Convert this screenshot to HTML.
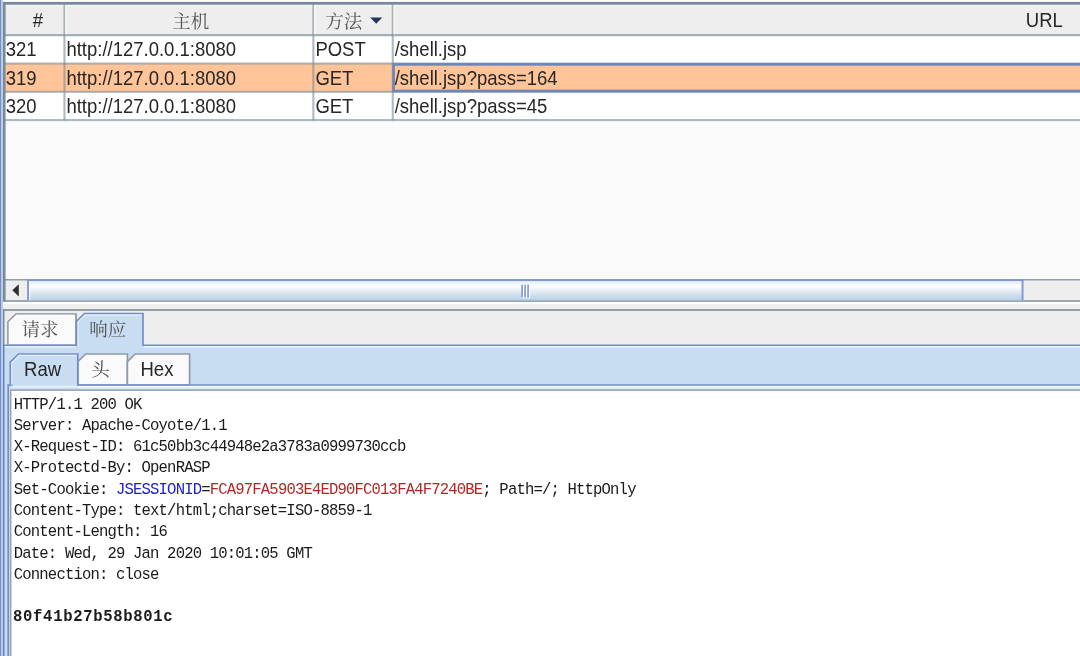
<!DOCTYPE html>
<html lang="zh-CN">
<head>
<meta charset="utf-8">
<title>Burp Suite - HTTP history</title>
<style>
  html, body { margin: 0; padding: 0; background: #ffffff; }
  body { width: 1080px; height: 656px; overflow: hidden; position: relative; }
  svg { position: absolute; left: 0; top: 0; display: block; will-change: transform; }
  text { white-space: pre; }
  .ui   { font-family: "Liberation Sans", "Noto Sans CJK SC", sans-serif; font-size: 18.5px; fill: #262626; }
  .cjk  { font-family: "Liberation Serif", "Noto Serif CJK SC", serif; font-size: 18.5px; fill: #555555; }
  .mono { font-family: "Liberation Mono", "Noto Sans CJK SC", monospace; font-size: 15.6px; fill: #1a1a1a; letter-spacing: -0.83px; }
  .b    { font-weight: bold; letter-spacing: 0.66px; }
  .blue { fill: #2020cc; }
  .red  { fill: #b42626; }
</style>
</head>
<body>
<svg width="1080" height="656" viewBox="0 0 1080 656">
  <defs>
    <linearGradient id="thumb" x1="0" y1="0" x2="0" y2="1">
      <stop offset="0" stop-color="#dde8f3"/>
      <stop offset="0.3" stop-color="#ffffff"/>
      <stop offset="0.6" stop-color="#dde8f3"/>
      <stop offset="1" stop-color="#b8cfe5"/>
    </linearGradient>
  </defs>

  <!-- page background -->
  <rect x="0" y="0" width="1080" height="656" fill="#ffffff"/>

  <!-- left window strip -->
  <rect x="0" y="0" width="1.5" height="656" fill="#6f8ecb"/>
  <rect x="1.5" y="0" width="1.5" height="656" fill="#b9cde6"/>

  <!-- ============ TABLE PANEL ============ -->
  <!-- header -->
  <rect x="4" y="3" width="1080" height="32" fill="#eeeeee"/>
  <rect x="4" y="4.6" width="1080" height="1.4" fill="#f6f6f6"/>

  <!-- rows -->
  <rect x="4" y="35" width="1080" height="85" fill="#ffffff"/>
  <rect x="4" y="63.5" width="1080" height="28.3" fill="#ffc599"/>

  <!-- empty viewport -->
  <rect x="4" y="120" width="1080" height="160" fill="#fafafa"/>

  <!-- grid lines -->
  <rect x="4" y="34.1" width="1080" height="2.1" fill="#7a8a99" opacity="0.7"/>
  <rect x="4" y="62.5" width="1080" height="2.1" fill="#7a8a99" opacity="0.6"/>
  <rect x="4" y="90.8" width="1080" height="2.1" fill="#7a8a99" opacity="0.6"/>
  <rect x="4" y="119" width="1080" height="2.1" fill="#7a8a99" opacity="0.6"/>

  <!-- column separators -->
  <rect x="63.4" y="4" width="2.1" height="116.5" fill="#7a8a99" opacity="0.6"/>
  <rect x="312.3" y="4" width="2.1" height="116.5" fill="#7a8a99" opacity="0.6"/>
  <rect x="391.7" y="4" width="2.1" height="116.5" fill="#7a8a99" opacity="0.6"/>
  <!-- header cell highlights -->
  <rect x="65.1" y="4.6" width="1.4" height="29.8" fill="#ffffff" opacity="0.8"/>
  <rect x="314.1" y="4.6" width="1.4" height="29.8" fill="#ffffff" opacity="0.8"/>
  <rect x="393.4" y="4.6" width="1.4" height="29.8" fill="#ffffff" opacity="0.8"/>

  <!-- focused cell border -->
  <rect x="393.6" y="64.4" width="700" height="26.6" fill="none" stroke="#6b86bd" stroke-width="2.6"/>

  <!-- header labels -->
  <text class="ui" transform="translate(32.7,27.2) scale(1,1.09)" fill="#333">#</text>
  <text class="cjk" x="172.2" y="27.9">主机</text>
  <text class="cjk" x="325.3" y="27.9">方法</text>
  <path d="M370.2 17.4 L382.2 17.4 L376.2 23.8 Z" fill="#1f3a57"/>
  <text class="ui" transform="translate(1025.8,27.2) scale(1,1.09)" fill="#333">URL</text>

  <!-- row text -->
  <text class="ui" transform="translate(5.7,56.2) scale(1,1.09)">321</text>
  <text class="ui" transform="translate(66.4,56.2) scale(1,1.09)">http://127.0.0.1:8080</text>
  <text class="ui" transform="translate(315.4,56.2) scale(1,1.09)">POST</text>
  <text class="ui" transform="translate(394.7,56.2) scale(1,1.09)">/shell.jsp</text>

  <text class="ui" transform="translate(5.7,84.5) scale(1,1.09)">319</text>
  <text class="ui" transform="translate(66.4,84.5) scale(1,1.09)">http://127.0.0.1:8080</text>
  <text class="ui" transform="translate(315.4,84.5) scale(1,1.09)">GET</text>
  <text class="ui" transform="translate(394.7,84.5) scale(1,1.09)">/shell.jsp?pass=164</text>

  <text class="ui" transform="translate(5.7,112.7) scale(1,1.09)">320</text>
  <text class="ui" transform="translate(66.4,112.7) scale(1,1.09)">http://127.0.0.1:8080</text>
  <text class="ui" transform="translate(315.4,112.7) scale(1,1.09)">GET</text>
  <text class="ui" transform="translate(394.7,112.7) scale(1,1.09)">/shell.jsp?pass=45</text>

  <!-- horizontal scrollbar -->
  <rect x="4" y="279.5" width="1080" height="22" fill="#eeeeee"/>
  <rect x="4" y="279" width="1080" height="1.5" fill="#8d9baa"/>
  <rect x="4" y="300.2" width="1080" height="1.7" fill="#8796a5"/>
  <!-- thumb -->
  <rect x="27.6" y="280.4" width="995" height="20" fill="url(#thumb)"/>
  <rect x="27.1" y="279" width="996.4" height="2" fill="#8099d0"/>
  <rect x="27.1" y="279" width="1.9" height="21.3" fill="#8099d0"/>
  <rect x="1021.6" y="279" width="1.9" height="21.3" fill="#8099d0"/>
  <rect x="29" y="281" width="1.3" height="19.3" fill="#ffffff" opacity="0.6"/>
  <!-- grip -->
  <g>
    <rect x="522.6" y="286" width="1.5" height="12.4" fill="#ffffff"/>
    <rect x="525.6" y="286" width="1.5" height="12.4" fill="#ffffff"/>
    <rect x="528.6" y="286" width="1.5" height="12.4" fill="#ffffff"/>
    <rect x="521.3" y="284.7" width="1.6" height="12.6" fill="#7f9bd3"/>
    <rect x="524.3" y="284.7" width="1.6" height="12.6" fill="#7f9bd3"/>
    <rect x="527.3" y="284.7" width="1.6" height="12.6" fill="#7f9bd3"/>
  </g>
  <!-- left arrow -->
  <path d="M12.3 290.3 L18.8 284.2 L18.8 296.4 Z" fill="#2e2e2e"/>

  <!-- outer border -->
  <rect x="3" y="1.9" width="1080" height="2.8" fill="#7a8a99"/>
  <rect x="3" y="1.9" width="2.55" height="300" fill="#7a8a99"/>

  <!-- gap under scrollbar -->
  <rect x="3" y="301.9" width="1080" height="2.2" fill="#ffffff"/>
  <rect x="3" y="304.1" width="1080" height="6" fill="#efefef"/>

  <!-- ============ REQUEST / RESPONSE PANEL ============ -->
  <rect x="3" y="309.8" width="1080" height="36" fill="#eeeeee"/>
  <!-- outer content area -->
  <rect x="3" y="345.2" width="1080" height="312" fill="#c8ddf2"/>
  <rect x="3" y="309.2" width="1080" height="1.6" fill="#7a8a99"/>
  <rect x="3" y="309.2" width="1.5" height="36" fill="#7a8a99"/>
  <rect x="3" y="344.5" width="1.5" height="312" fill="#6382bf"/>

  <!-- tab: 请求 (unselected) -->
  <path d="M8 345.2 L8 321.8 L16 314 L76 314 L76 345.2 Z" fill="#fafafa" stroke="#8796a5" stroke-width="1.65"/>
  <path d="M9.5 344.4 L9.5 322.4 L16.6 315.5 L74.6 315.5" fill="none" stroke="#ffffff" stroke-width="1.4"/>
  <!-- tab: 响应 (selected) -->
  <path d="M76.5 346.5 L76.5 321.3 L84.5 313.5 L143 313.5 L143 346.5 Z" fill="#c8ddf2"/>
  <path d="M4 345.2 L76.5 345.2 L76.5 321.3 L84.5 313.5 L143 313.5 L143 345.2 L1084 345.2" fill="none" stroke="#728dc6" stroke-width="1.65"/>
  <path d="M78 346 L78 321.9 L85.1 315 L141.5 315" fill="none" stroke="#ffffff" stroke-width="1.3" opacity="0.5"/>
  <rect x="4.5" y="346" width="71.2" height="1.5" fill="#ffffff" opacity="0.6"/>
  <rect x="143.8" y="346" width="940" height="1.5" fill="#ffffff" opacity="0.6"/>
  <text class="cjk" x="21.5" y="335.5">请求</text>
  <text class="cjk" x="89.3" y="335.5">响应</text>

  <!-- inner tabs -->
  <!-- 头 -->
  <path d="M77.8 385 L77.8 361.7 L85.6 354 L127.4 354 L127.4 385 Z" fill="#fafafa" stroke="#8c9aa8" stroke-width="1.65"/>
  <!-- Hex -->
  <path d="M127.4 385 L127.4 361.7 L135.2 354 L189.6 354 L189.6 385 Z" fill="#fafafa" stroke="#8c9aa8" stroke-width="1.65"/>
  <!-- Raw (selected) + inner content border -->
  <path d="M8.2 657 L8.2 385 L12.6 385 M10.3 385 L10.3 362.2 L18.5 354 L77.8 354 L77.8 385 L1084 385" fill="none" stroke="#728dc6" stroke-width="1.65"/>
  <path d="M11.7 385 L11.7 362.8 L19.1 355.4 L76.4 355.4" fill="none" stroke="#ffffff" stroke-width="1.2" opacity="0.55"/>
  <text class="ui" transform="translate(24.1,375.9) scale(1,1.09)">Raw</text>
  <text class="cjk" x="91.3" y="376">头</text>
  <text class="ui" transform="translate(140.5,375.9) scale(1,1.09)">Hex</text>

  <!-- text area -->
  <rect x="12" y="385.9" width="1075" height="1.7" fill="#ffffff" opacity="0.6"/>
  <rect x="78.6" y="385.9" width="1010" height="3" fill="#ffffff" opacity="0.35"/>
  <rect x="10.7" y="390.2" width="1075" height="270" fill="#ffffff" stroke="#96a3b0" stroke-width="1.5"/>

  <g transform="scale(1,1.10)">
    <text class="mono" x="13.8" y="371.45">HTTP/1.1 200 OK</text>
    <text class="mono" x="13.8" y="390.80">Server: Apache-Coyote/1.1</text>
    <text class="mono" x="13.8" y="410.15">X-Request-ID: 61c50bb3c44948e2a3783a0999730ccb</text>
    <text class="mono" x="13.8" y="429.49">X-Protectd-By: OpenRASP</text>
    <text class="mono" x="13.8" y="448.84">Set-Cookie: <tspan class="blue">JSESSIONID</tspan>=<tspan class="red">FCA97FA5903E4ED90FC013FA4F7240BE</tspan>; Path=/; HttpOnly</text>
    <text class="mono" x="13.8" y="468.18">Content-Type: text/html;charset=ISO-8859-1</text>
    <text class="mono" x="13.8" y="487.53">Content-Length: 16</text>
    <text class="mono" x="13.8" y="506.87">Date: Wed, 29 Jan 2020 10:01:05 GMT</text>
    <text class="mono" x="13.8" y="526.22">Connection: close</text>
    <text class="mono b" x="13.1" y="564.91">80f41b27b58b801c</text>
  </g>
</svg>
</body>
</html>
